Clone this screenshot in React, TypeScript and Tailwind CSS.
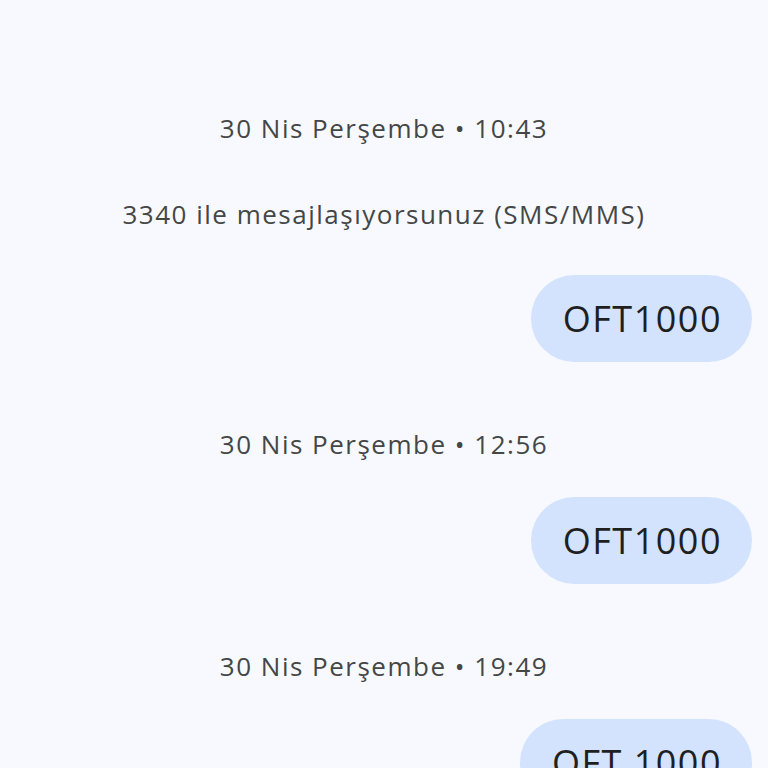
import React from 'react';

const Stamp = ({ text, className = '' }: { text: string; className?: string }) => (
  <div className={`h-[36px] flex items-center justify-center text-[26px] tracking-[1.5px] text-[#444746] ${className}`}>{text}</div>
);

const Bubble = ({ text, className = '' }: { text: string; className?: string }) => (
  <div className={`flex justify-end pr-4 ${className}`}>
    <div className="h-[87px] pl-8 pr-[30px] rounded-full bg-[#d3e3fd] flex items-center text-[36px] tracking-[1.5px] text-[#1f1f1f]">{text}</div>
  </div>
);

const App = () => {
  return (
    <div className="w-[768px] h-[768px] overflow-hidden bg-[#f7f9fe] pt-[110px]" style={{ fontFamily: '"Open Sans", "Noto Sans", sans-serif' }}>
      <Stamp text="30 Nis Perşembe • 10:43" />
      <Stamp text="3340 ile mesajlaşıyorsunuz (SMS/MMS)" className="mt-[50px]" />
      <Bubble text="OFT1000" className="mt-[43px]" />
      <Stamp text="30 Nis Perşembe • 12:56" className="mt-[64px]" />
      <Bubble text="OFT1000" className="mt-[35px]" />
      <Stamp text="30 Nis Perşembe • 19:49" className="mt-[64px]" />
      <Bubble text="OFT 1000" className="mt-[35px]" />
    </div>
  );
};

export default App;
